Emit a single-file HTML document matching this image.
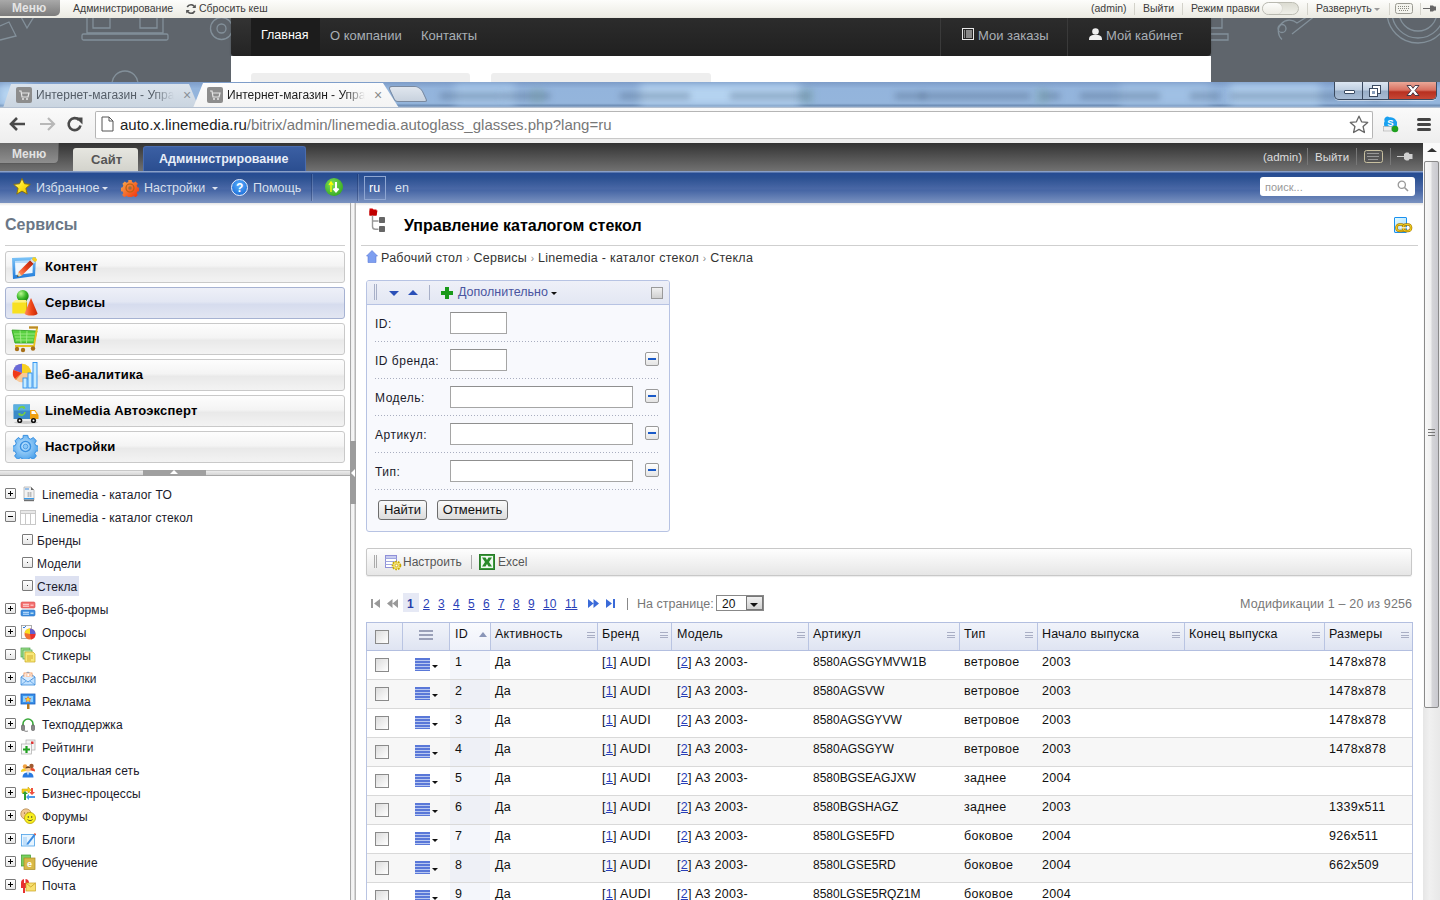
<!DOCTYPE html>
<html><head><meta charset="utf-8">
<style>
*{margin:0;padding:0;box-sizing:border-box}
html,body{width:1440px;height:900px;overflow:hidden;background:#fff;font-family:"Liberation Sans",sans-serif;font-size:12px;color:#000}
.a{position:absolute}
.t{position:absolute;white-space:nowrap;line-height:1}
/* top outer bar */
#topbar{left:0;top:0;width:1440px;height:18px;background:linear-gradient(#fdfdfb,#ebeae2)}
.tb{color:#3c3c3c;font-size:10.5px;top:3px}
.tsep{position:absolute;top:3px;width:1px;height:12px;background:#d3d2ca}
#pattern{left:0;top:18px;width:1440px;height:64px;background:#5f656c;overflow:hidden}
#darknav{left:231px;top:18px;width:980px;height:38px;background:linear-gradient(#2c2c2c,#202020);border-radius:0 0 4px 4px;box-shadow:0 1px 2px rgba(0,0,0,.3)}
#whitebox{left:231px;top:56px;width:980px;height:26px;background:#fff}
.nv{color:#a9afb5;font-size:13px;top:29px}
/* tabs strip */
#tabstrip{left:0;top:82px;width:1440px;height:26px;overflow:hidden;background:linear-gradient(#7d9cc8 0%,#93b4dc 25%,#94b5dc 82%,#7090b8 90%,#a8bcd6 100%)}
#toolbar{left:0;top:107px;width:1440px;height:36px;background:linear-gradient(#fafafa,#eeeeee);border-top:1px solid #b4c0d0}
/* admin top */
#admtop{left:0;top:143px;width:1424px;height:28px;background:linear-gradient(#333333,#717171)}
#bluebar{left:0;top:171px;width:1424px;height:32px;background:linear-gradient(#8aa0c8 0px,#8aa0c8 1px,#254b92 2px,#2c5192 7px,#4a68a6 18px,#4565a4 19px,#7a92c0 32px)}
.bt{color:#d8e0ee;font-size:12.5px;top:182px}
#vscroll{left:1423px;top:143px;width:17px;height:757px;background:linear-gradient(90deg,#e6e6e6,#f0f0f0 40%,#e8e8e8)}

/* content */
.lp-title{left:5px;top:217px;font-size:16px;font-weight:bold;color:#6b7786}
.mi{position:absolute;left:5px;width:340px;height:32px;border:1px solid #c9c9c9;border-radius:3px;background:linear-gradient(#fdfdfd 0%,#f4f4f4 45%,#e9e9e9 55%,#f3f3f3 100%)}
.mi.sel{border-color:#a6b2d2;background:linear-gradient(#eef0f8 0%,#e3e7f3 45%,#d6dcee 55%,#e2e6f2 100%)}
.mit{position:absolute;left:45px;font-size:13px;letter-spacing:.2px;font-weight:bold;color:#000;white-space:nowrap;line-height:1}
.tr{position:absolute;white-space:nowrap;line-height:1;font-size:12px;color:#1a1a2a;letter-spacing:.1px}
.pbox{position:absolute;width:11px;height:11px;border:1px solid #7a7a7a;background:linear-gradient(#fff,#e6e6e6);border-radius:1px}
.pbox.p::before{content:"";position:absolute;left:2px;top:4px;width:5px;height:1px;background:#000}
.pbox.p::after{content:"";position:absolute;left:4px;top:2px;width:1px;height:5px;background:#000}
.pbox.m::before{content:"";position:absolute;left:2px;top:4px;width:5px;height:1px;background:#000}
.pbox.d::before{content:"";position:absolute;left:4px;top:4px;width:1px;height:1px;background:#333}
.fl{position:absolute;left:375px;font-size:12px;color:#1a1a2a;white-space:nowrap;line-height:1;letter-spacing:.5px}
.inp{position:absolute;left:450px;height:22px;background:#fff;border:1px solid #a5a5a5;border-top-color:#8f8f8f}
.dots{position:absolute;left:375px;width:285px;height:1px;background:repeating-linear-gradient(90deg,#a9aec0 0 1px,transparent 1px 3px)}
.mbtn{position:absolute;left:645px;width:14px;height:14px;border:1px solid #9a9a9a;border-radius:2px;background:linear-gradient(#fff,#e4e4e4)}
.mbtn::before{content:"";position:absolute;left:2px;top:5px;width:8px;height:2px;background:#1a5ac8}
.btn{position:absolute;top:500px;height:20px;border:1px solid #6d6d6d;border-radius:3px;background:linear-gradient(#fafafa,#dcdcdc);font-size:13px;color:#111;text-align:center;line-height:18px}
.pg{position:absolute;top:598px;font-size:12px;color:#2a3fb8;text-decoration:underline;line-height:1;white-space:nowrap}
.th{position:absolute;top:628px;font-size:12.5px;color:#111;white-space:nowrap;line-height:1;letter-spacing:.2px}
.hm{position:absolute;top:632px;width:8px;height:6px;border-top:1px solid #a9aec4;border-bottom:1px solid #a9aec4}
.hm::before{content:"";position:absolute;left:0;top:2px;width:8px;height:1px;background:#a9aec4}
.cs{position:absolute;width:14px;height:14px;border:1px solid #8a8a8a;background:linear-gradient(135deg,#dcdcdc,#fff)}
.td{position:absolute;font-size:12.5px;color:#111;white-space:nowrap;line-height:1;letter-spacing:.3px}
.ln{color:#2a3fb8;text-decoration:underline}
.act{position:absolute;left:415px;width:15px;height:13px;background:repeating-linear-gradient(#5a78d8 0 2px,#b9c8f0 2px 3px)}
</style></head><body>
<!-- ========== OUTER SITE TOP BAR ========== -->
<div id="topbar" class="a"></div>
<div class="a" style="left:0;top:0;width:60px;height:16px;background:linear-gradient(#a9a9a9,#7b7b7b);border-radius:0 0 5px 0"></div>
<div class="t" style="left:12px;top:2px;font-size:12px;font-weight:bold;color:#e4e4e4">Меню</div>
<div class="t tb" style="left:73px">Администрирование</div>
<svg class="a" style="left:185px;top:3px" width="12" height="12" viewBox="0 0 12 12"><path d="M10 4.5A4.3 4.3 0 0 0 2.2 4M2 7.5A4.3 4.3 0 0 0 9.8 8" fill="none" stroke="#555" stroke-width="1.6"/><path d="M10.8 1.5v3.6H7.2zM1.2 10.5V6.9h3.6z" fill="#555"/></svg>
<div class="t tb" style="left:199px">Сбросить кеш</div>
<div class="t tb" style="left:1091px">(admin)</div>
<div class="tsep" style="left:1134px"></div>
<div class="t tb" style="left:1143px">Выйти</div>
<div class="tsep" style="left:1182px"></div>
<div class="t tb" style="left:1191px">Режим правки</div>
<div class="a" style="left:1262px;top:2px;width:37px;height:13px;border-radius:7px;background:linear-gradient(#dcdcd2,#efefe8);border:1px solid #bdbdb3"></div>
<div class="a" style="left:1263px;top:3px;width:19px;height:11px;border-radius:6px;background:linear-gradient(#fdfdfb,#ecebe3);box-shadow:0 0 1px #999"></div>
<div class="tsep" style="left:1307px"></div>
<div class="t tb" style="left:1316px">Развернуть</div>
<div class="a" style="left:1374px;top:8px;width:0;height:0;border-left:3px solid transparent;border-right:3px solid transparent;border-top:3px solid #999"></div>
<div class="tsep" style="left:1389px"></div>
<svg class="a" style="left:1395px;top:3px" width="18" height="11" viewBox="0 0 18 11"><rect x=".5" y=".5" width="17" height="10" rx="2" fill="#f4f4ee" stroke="#9a9a92"/><path d="M3 3.5h12M3 5.5h12M4 7.5h10" stroke="#8a8a82" stroke-dasharray="1 1"/></svg>
<div class="tsep" style="left:1420px"></div>
<svg class="a" style="left:1423px;top:3px" width="15" height="11" viewBox="0 0 15 11"><path d="M0 5.5h7" stroke="#666" stroke-width="1"/><path d="M7 2.5h3l1 1h2v4h-2l-1 1H7z" fill="#666"/></svg>

<!-- ========== OUTER SITE HEADER ========== -->
<div id="pattern" class="a">
  <svg width="1440" height="64" style="position:absolute;left:0;top:0" fill="none" stroke="#83909a" stroke-width="1.3">
    <path d="M0 8 L9 4 L16 18 L0 22"/><path d="M20 -3 L27 10 L35 -3"/>
    <path d="M87 -3 V15 H163 V-3"/><path d="M93 -3 V10 H110 V-3"/><path d="M140 -3 V10 H157 V-3"/>
    <rect x="82" y="16" width="86" height="6" rx="1.5"/>
    <circle cx="221.5" cy="10.5" r="11"/><circle cx="221.5" cy="10.5" r="4.5"/>
    <path d="M112 66 A13 13 0 0 1 138 66"/>
    <path d="M1211 10 H1222 V-3"/><path d="M1211 16 H1228 V22 H1211"/>
    <path d="M1282 21.5 A11 11 0 1 1 1297 5 L1310 -3 M1292 16 L1306 5 L1316 -3"/><circle cx="1282" cy="10.5" r="4"/>
    <circle cx="1418" cy="-6" r="31"/><circle cx="1418" cy="-6" r="26"/><circle cx="1418" cy="-6" r="19"/>
  </svg>
</div>
<div id="darknav" class="a"></div>
<div class="a" style="left:231px;top:18px;width:20px;height:38px;background:linear-gradient(#333,#242424);border-radius:0 0 0 4px"></div>
<div class="a" style="left:251px;top:18px;width:69px;height:38px;background:#1c1c1c"></div>
<div class="t" style="left:261px;top:29px;font-size:12.5px;color:#fff">Главная</div>
<div class="t nv" style="left:330px">О компании</div>
<div class="t nv" style="left:421px">Контакты</div>
<div class="a" style="left:940px;top:18px;width:1px;height:38px;background:#3a3a3a"></div>
<div class="a" style="left:1067px;top:18px;width:1px;height:38px;background:#3a3a3a"></div>
<svg class="a" style="left:962px;top:28px" width="12" height="12" viewBox="0 0 12 12"><rect x="0.5" y="0.5" width="11" height="11" fill="none" stroke="#e8e8e8"/><path d="M2 3h1M2 5h1M2 7h1M2 9h1M4 3h6M4 5h6M4 7h6M4 9h6" stroke="#e8e8e8" stroke-width="1.2"/></svg>
<div class="t nv" style="left:978px">Мои заказы</div>
<svg class="a" style="left:1089px;top:28px" width="13" height="12" viewBox="0 0 13 12"><circle cx="6.5" cy="3.5" r="3.3" fill="#f0f0f0"/><path d="M0 12 C0 7 3 7 6.5 7 C10 7 13 7 13 12Z" fill="#f0f0f0"/></svg>
<div class="t nv" style="left:1106px">Мой кабинет</div>
<div id="whitebox" class="a"></div>
<div class="a" style="left:251px;top:73px;width:219px;height:9px;background:#eeeeee;border-radius:3px 3px 0 0"></div>
<div class="a" style="left:491px;top:73px;width:220px;height:9px;background:#eeeeee;border-radius:3px 3px 0 0"></div>

<!-- ========== BROWSER TAB STRIP ========== -->
<div id="tabstrip" class="a">
<div class="a" style="left:0px;top:3px;width:30px;height:20px;background:#b8d6f2;filter:blur(4px)"></div>
<div class="a" style="left:455px;top:3px;width:60px;height:20px;background:#a8c8ea;filter:blur(4px)"></div>
<div class="a" style="left:640px;top:3px;width:160px;height:20px;background:#b5d3f0;filter:blur(4px)"></div>
<div class="a" style="left:1120px;top:3px;width:90px;height:20px;background:#a0c0e4;filter:blur(4px)"></div>
<div class="a" style="left:1230px;top:3px;width:90px;height:20px;background:#b0cfee;filter:blur(4px)"></div>
<div class="a" style="left:440px;top:11px;width:60px;height:6px;background:rgba(60,80,110,.35);filter:blur(3px)"></div>
<div class="a" style="left:500px;top:11px;width:50px;height:6px;background:rgba(60,80,110,.35);filter:blur(3px)"></div>
<div class="a" style="left:620px;top:11px;width:70px;height:6px;background:rgba(60,80,110,.35);filter:blur(3px)"></div>
<div class="a" style="left:730px;top:11px;width:80px;height:6px;background:rgba(60,80,110,.35);filter:blur(3px)"></div>
<div class="a" style="left:895px;top:11px;width:30px;height:6px;background:rgba(60,80,110,.35);filter:blur(3px)"></div>
<div class="a" style="left:920px;top:11px;width:110px;height:6px;background:rgba(60,80,110,.35);filter:blur(3px)"></div>
<div class="a" style="left:1040px;top:11px;width:20px;height:6px;background:rgba(60,80,110,.35);filter:blur(3px)"></div>
<div class="a" style="left:1080px;top:11px;width:80px;height:6px;background:rgba(60,80,110,.35);filter:blur(3px)"></div>
<div class="a" style="left:1190px;top:11px;width:30px;height:6px;background:rgba(60,80,110,.35);filter:blur(3px)"></div>
<div class="a" style="left:1230px;top:11px;width:110px;height:6px;background:rgba(60,80,110,.35);filter:blur(3px)"></div>
<div class="a" style="left:1340px;top:11px;width:40px;height:6px;background:rgba(60,80,110,.35);filter:blur(3px)"></div>
<div class="a" style="left:1370px;top:11px;width:40px;height:6px;background:rgba(60,80,110,.35);filter:blur(3px)"></div>
<div class="a" style="left:530px;top:6px;width:14px;height:16px;background:rgba(110,160,140,.22);filter:blur(3px)"></div>
<div class="a" style="left:800px;top:6px;width:14px;height:16px;background:rgba(110,160,140,.22);filter:blur(3px)"></div>
<div class="a" style="left:1035px;top:6px;width:14px;height:16px;background:rgba(110,160,140,.22);filter:blur(3px)"></div>
</div>
<!-- inactive tab -->
<div class="a" style="left:3px;top:84px;width:198px;height:24px;background:linear-gradient(#dbe3ec,#c9d4e0);clip-path:polygon(8px 0,186px 0,196px 100%,0 100%);"></div>
<div class="a" style="left:16px;top:87px;width:16px;height:16px;background:#8d8d8d;border-radius:2px"></div>
<svg class="a" style="left:18px;top:89px" width="12" height="12" viewBox="0 0 12 12"><path d="M1 2h2l1 6h6l1-4H4" fill="none" stroke="#e6e6e6" stroke-width="1.2"/><circle cx="5" cy="10" r="1" fill="#e6e6e6"/><circle cx="9" cy="10" r="1" fill="#e6e6e6"/></svg>
<div class="t" style="left:36px;top:89px;font-size:12px;color:#555e68;-webkit-mask-image:linear-gradient(90deg,#000 85%,transparent 100%)">Интернет-магазин - Упра</div>
<div class="t" style="left:183px;top:88px;font-size:14px;color:#8a9099">×</div>
<!-- active tab -->
<div class="a" style="left:193px;top:83px;width:206px;height:25px;background:linear-gradient(#fcfcfc,#f3f3f3);clip-path:polygon(10px 0,190px 0,206px 100%,0 100%);"></div>
<div class="a" style="left:207px;top:87px;width:16px;height:16px;background:#8d8d8d;border-radius:2px"></div>
<svg class="a" style="left:209px;top:89px" width="12" height="12" viewBox="0 0 12 12"><path d="M1 2h2l1 6h6l1-4H4" fill="none" stroke="#e6e6e6" stroke-width="1.2"/><circle cx="5" cy="10" r="1" fill="#e6e6e6"/><circle cx="9" cy="10" r="1" fill="#e6e6e6"/></svg>
<div class="t" style="left:227px;top:89px;font-size:12px;color:#1e1e1e;-webkit-mask-image:linear-gradient(90deg,#000 85%,transparent 100%)">Интернет-магазин - Упра</div>
<div class="t" style="left:374px;top:88px;font-size:14px;color:#8a8a8a">×</div>
<!-- new tab -->
<div class="a" style="left:395px;top:86px;width:33px;height:16px;background:linear-gradient(#e0e6ee,#c8d2de);border:1px solid #7a8aa0;border-radius:4px 6px 3px 3px;transform:skewX(25deg);transform-origin:0 100%"></div>
<!-- window controls -->
<div class="a" style="left:1334px;top:82px;width:103px;height:18px;border:1px solid #3a4a60;border-top:none;border-radius:0 0 5px 5px;overflow:hidden;background:linear-gradient(#dce6f2 0%,#c0d0e2 45%,#98aec8 55%,#a8bcd4 100%);box-shadow:0 1px 0 rgba(255,255,255,.5)">
  <div class="a" style="left:27px;top:0;width:1px;height:18px;background:#3a4a60"></div>
  <div class="a" style="left:53px;top:0;width:1px;height:18px;background:#3a4a60"></div>
  <div class="a" style="left:54px;top:0;width:49px;height:18px;background:linear-gradient(#eaa898 0%,#d87060 45%,#b83020 55%,#c84a38 100%)"></div>
  <div class="a" style="left:9px;top:8px;width:11px;height:4px;background:#fff;border:1px solid #3a4a60;border-radius:1px"></div>
  <svg class="a" style="left:33px;top:2px" width="14" height="14" viewBox="0 0 14 14"><rect x="4.5" y="1.5" width="8" height="8" fill="#fff" stroke="#3a4a60"/><rect x="1.5" y="4.5" width="8" height="8" fill="#fff" stroke="#3a4a60"/><rect x="4" y="7" width="3" height="3" fill="#8aa0bc"/></svg>
  <svg class="a" style="left:70px;top:2px" width="16" height="13" viewBox="0 0 16 13"><path d="M2 1.5h4l2 2.8 2-2.8h4l-4 5 4 5h-4l-2-2.8-2 2.8H2l4-5z" fill="#fff" stroke="#3a3040" stroke-width=".9"/></svg>
</div>

<!-- ========== BROWSER TOOLBAR ========== -->
<div id="toolbar" class="a"></div>
<svg class="a" style="left:9px;top:116px" width="18" height="16" viewBox="0 0 18 16"><path d="M16 8H3M8 2L2 8l6 6" fill="none" stroke="#4a4a4a" stroke-width="2.6" stroke-linejoin="miter"/></svg>
<svg class="a" style="left:38px;top:116px" width="18" height="16" viewBox="0 0 18 16"><path d="M2 8h13M10 2l6 6-6 6" fill="none" stroke="#b8b8b8" stroke-width="2.2"/></svg>
<svg class="a" style="left:66px;top:116px" width="18" height="17" viewBox="0 0 18 17"><path d="M14.5 9.5A6 6 0 1 1 13 4" fill="none" stroke="#4a4a4a" stroke-width="2.6"/><path d="M9.5 1.5h7v7z" fill="#4a4a4a"/></svg>
<div class="a" style="left:95px;top:111px;width:1278px;height:28px;background:#fff;border:1px solid #b5b5b5;border-radius:2px;border-bottom-color:#c8c8c8"></div>
<svg class="a" style="left:101px;top:116px" width="13" height="16" viewBox="0 0 13 16"><path d="M1 1h7l4 4v10H1z M8 1v4h4" fill="#fff" stroke="#555" stroke-width="1"/></svg>
<div class="t" style="left:120px;top:117px;font-size:15px;color:#222">auto.x.linemedia.ru<span style="color:#777">/bitrix/admin/linemedia.autoglass_glasses.php?lang=ru</span></div>
<svg class="a" style="left:1349px;top:115px" width="20" height="19" viewBox="0 0 20 19"><path d="M10 1.2l2.6 5.6 6.1.6-4.6 4.1 1.3 6-5.4-3.1-5.4 3.1 1.3-6L1.3 7.4l6.1-.6z" fill="none" stroke="#666" stroke-width="1.3" stroke-linejoin="round"/></svg>
<svg class="a" style="left:1382px;top:115px" width="18" height="18" viewBox="0 0 18 18"><path d="M5 1.5c1 0 1.8.3 2.4.8A6.5 6.5 0 0 1 15 9.5c0 .8-.1 1.6-.4 2.3H2.6A6.5 6.5 0 0 1 2 9c0-1 .2-1.9.6-2.7A3.5 3.5 0 0 1 5 1.5z" fill="#1aa0f0"/><text x="8.5" y="11" font-size="9.5" font-weight="bold" font-family="Liberation Sans" fill="#fff" text-anchor="middle">S</text><rect x="1.5" y="11.5" width="8" height="4.5" fill="#eee" stroke="#aaa" stroke-width=".6"/><circle cx="13" cy="14" r="3.3" fill="#20a020"/></svg>
<div class="a" style="left:1417px;top:118px;width:14px;height:3px;border-radius:1.5px;background:#444"></div>
<div class="a" style="left:1417px;top:123px;width:14px;height:3px;border-radius:1.5px;background:#444"></div>
<div class="a" style="left:1417px;top:128px;width:14px;height:3px;border-radius:1.5px;background:#444"></div>

<!-- ========== ADMIN TOP ========== -->
<div id="admtop" class="a"></div>
<div class="a" style="left:0;top:143px;width:59px;height:21px;background:linear-gradient(#6a6a6a,#8e8e8e);border-radius:0 0 5px 0;border:1px solid #5a5a5a;border-top:none;border-left:none"></div>
<div class="t" style="left:12px;top:148px;font-size:12px;font-weight:bold;color:#e2e2e2">Меню</div>
<div class="a" style="left:73px;top:148px;width:65px;height:23px;background:linear-gradient(#e6e6e0,#d3d3cc);border-radius:3px 3px 0 0"></div>
<div class="t" style="left:91px;top:153px;font-size:13px;font-weight:bold;color:#555">Сайт</div>
<div class="a" style="left:143px;top:146px;width:163px;height:25px;background:linear-gradient(#3b5fa3,#2b4e90);border-radius:3px 3px 0 0;border:1px solid #4a6cae;border-bottom:none"></div>
<div class="t" style="left:159px;top:153px;font-size:12.5px;font-weight:bold;color:#e8eef8">Администрирование</div>
<div class="t" style="left:1263px;top:152px;font-size:11.5px;color:#ddd">(admin)</div>
<div class="a" style="left:1307px;top:148px;width:1px;height:17px;background:#777"></div>
<div class="t" style="left:1315px;top:152px;font-size:11.5px;color:#ddd">Выйти</div>
<div class="a" style="left:1356px;top:148px;width:1px;height:17px;background:#777"></div>
<svg class="a" style="left:1364px;top:150px" width="19" height="13" viewBox="0 0 19 13"><rect x=".5" y=".5" width="18" height="12" rx="2" fill="#555" stroke="#c8c0a0"/><path d="M3.5 3.5h12M3.5 6.5h12M4.5 9.5h10" stroke="#ddd" stroke-dasharray="1 1"/></svg>
<div class="a" style="left:1390px;top:148px;width:1px;height:17px;background:#777"></div>
<svg class="a" style="left:1397px;top:151px" width="17" height="11" viewBox="0 0 17 11"><path d="M0 5.5h7" stroke="#ccc" stroke-width="1"/><path d="M7 3l2-1.5h2.5l1 1.5h3v5h-3l-1 1.5H9L7 8z" fill="#d0d0d0"/></svg>

<!-- ========== BLUE TOOLBAR ========== -->
<div id="bluebar" class="a"></div>
<div class="a" style="left:0;top:203px;width:1423px;height:3px;background:linear-gradient(#e4e4e4,rgba(255,255,255,0))"></div>
<svg class="a" style="left:13px;top:178px" width="18" height="17" viewBox="0 0 18 17"><defs><linearGradient id="gs" x1="0" y1="0" x2="1" y2="1"><stop offset="0" stop-color="#fffbe0"/><stop offset=".45" stop-color="#ffe820"/><stop offset="1" stop-color="#e8b800"/></linearGradient></defs><path d="M9 0.5l2.5 5.3 5.8.6-4.4 3.9 1.3 5.8L9 13.1l-5.2 3 1.3-5.8L.7 6.4l5.8-.6z" fill="url(#gs)" stroke="#8a7000" stroke-width=".9"/></svg>
<div class="t bt" style="left:36px">Избранное</div>
<div class="a" style="left:102px;top:187px;border-left:3px solid transparent;border-right:3px solid transparent;border-top:3px solid #dde4f0"></div>
<svg class="a" style="left:121px;top:179px" width="18" height="18" viewBox="0 0 27 27"><defs><linearGradient id="go" x1="0" y1="0" x2="1" y2="1"><stop offset="0" stop-color="#f8b050"/><stop offset="1" stop-color="#f02808"/></linearGradient></defs><path d="M11 1.5h5l.6 3 2.6 1.1 2.6-1.8 3.5 3.5-1.8 2.6 1.1 2.6 3 .6v5l-3 .6-1.1 2.6 1.8 2.6-3.5 3.5-2.6-1.8-2.6 1.1-.6 3h-5l-.6-3-2.6-1.1-2.6 1.8-3.5-3.5 1.8-2.6-1.1-2.6-3-.6v-5l3-.6 1.1-2.6L2.2 7.3l3.5-3.5 2.6 1.8L10.9 4.5z" fill="url(#go)"/><circle cx="13.5" cy="13.5" r="6" fill="none" stroke="#b86010" stroke-width="1.8"/><circle cx="13.5" cy="13.5" r="2.6" fill="#9a7040"/></svg>
<div class="t bt" style="left:144px">Настройки</div>
<div class="a" style="left:212px;top:187px;border-left:3px solid transparent;border-right:3px solid transparent;border-top:3px solid #dde4f0"></div>
<div class="a" style="left:231px;top:179px;width:17px;height:17px;border-radius:50%;background:radial-gradient(circle at 50% 35%,#5ab0ff,#1060d0);border:1.5px solid #e8f0ff"></div>
<div class="t" style="left:236px;top:182px;font-size:12px;font-weight:bold;color:#fff">?</div>
<div class="t bt" style="left:253px">Помощь</div>
<div class="a" style="left:311px;top:174px;width:1px;height:27px;background:rgba(20,40,90,.35);box-shadow:1px 0 0 rgba(255,255,255,.15)"></div>
<div class="a" style="left:325px;top:178px;width:18px;height:18px;border-radius:50%;background:radial-gradient(circle at 40% 35%,#7ee05a,#229a10)"></div>
<svg class="a" style="left:327px;top:180px" width="14" height="14" viewBox="0 0 14 14"><path d="M4 12V3M2 5l2-3 2 3" fill="none" stroke="#ff0" stroke-width="1.3"/><path d="M9 2v9M6.5 8.5L9 11.5l2.5-3" fill="none" stroke="#fff" stroke-width="2"/></svg>
<div class="a" style="left:357px;top:174px;width:1px;height:27px;background:rgba(20,40,90,.35);box-shadow:1px 0 0 rgba(255,255,255,.15)"></div>
<div class="a" style="left:364px;top:176px;width:22px;height:24px;border:1px solid #8ea6d2"></div>
<div class="t bt" style="left:369px;top:182px;color:#fff">ru</div>
<div class="t bt" style="left:395px">en</div>
<div class="a" style="left:1260px;top:177px;width:155px;height:19px;background:#fff;border-radius:3px"></div>
<div class="t" style="left:1265px;top:182px;font-size:11px;color:#999">поиск...</div>
<svg class="a" style="left:1397px;top:180px" width="12" height="12" viewBox="0 0 12 12"><circle cx="4.8" cy="4.8" r="3.6" fill="none" stroke="#999" stroke-width="1.3"/><path d="M7.5 7.5l3.5 3.5" stroke="#999" stroke-width="1.6"/></svg>

<div class="a" style="left:350px;top:203px;width:6px;height:697px;background:linear-gradient(90deg,#a8a8a8 0,#a8a8a8 1px,#efefef 1px,#f6f6f6 4px,#b5b5b5 5px,#b5b5b5 6px)"></div>
<div class="a" style="left:350px;top:441px;width:6px;height:63px;background:#9c9c9c"></div>
<div class="a" style="left:351px;top:469px;width:0;height:0;border-top:4px solid transparent;border-bottom:4px solid transparent;border-right:4px solid #fff"></div>
<div class="t lp-title">Сервисы</div>
<div class="a" style="left:5px;top:245px;width:340px;height:1px;background:#cfcfcf"></div>
<div class="mi" style="top:251px"></div>
<div class="mit" style="top:260px">Контент</div>
<div class="mi sel" style="top:287px"></div>
<div class="mit" style="top:296px">Сервисы</div>
<div class="mi" style="top:323px"></div>
<div class="mit" style="top:332px">Магазин</div>
<div class="mi" style="top:359px"></div>
<div class="mit" style="top:368px">Веб-аналитика</div>
<div class="mi" style="top:395px"></div>
<div class="mit" style="top:404px">LineMedia Автоэксперт</div>
<div class="mi" style="top:431px"></div>
<div class="mit" style="top:440px">Настройки</div>
<svg class="a" style="left:10px;top:253px" width="30" height="28" viewBox="0 0 30 28">
<defs><linearGradient id="gw" x1="0" y1="0" x2="0" y2="1"><stop offset="0" stop-color="#7cc4f8"/><stop offset="1" stop-color="#1f7ad8"/></linearGradient><linearGradient id="gp" x1="0" y1="0" x2="1" y2="0"><stop offset="0" stop-color="#ff8a5a"/><stop offset=".5" stop-color="#e8401a"/><stop offset="1" stop-color="#b82a10"/></linearGradient></defs>
<path d="M2 5L26 4 25 23 3 26z" fill="url(#gw)"/><path d="M5 8L23 7.5 22.5 20 5.5 22z" fill="#eef7ff"/><path d="M5 8h18v2H5z" fill="#b8dcfa"/>
<g transform="rotate(-45 17 14)"><rect x="7" y="11.5" width="17" height="5" fill="url(#gp)"/><path d="M7 11.5L3 14l4 2.5z" fill="#f4d8a0"/><path d="M3 14l1.6-1 0 2z" fill="#333"/><rect x="24" y="11.5" width="2" height="5" fill="#ddd"/><rect x="26" y="11.5" width="3.5" height="5" rx="1.5" fill="#f8d020"/></g></svg>
<svg class="a" style="left:11px;top:289px" width="28" height="28" viewBox="0 0 28 28">
<defs><radialGradient id="gb" cx=".35" cy=".3" r=".7"><stop offset="0" stop-color="#b8f890"/><stop offset=".6" stop-color="#3ab82a"/><stop offset="1" stop-color="#1a8a10"/></radialGradient><linearGradient id="gc" x1="0" y1="0" x2="1" y2="0"><stop offset="0" stop-color="#ff9060"/><stop offset=".5" stop-color="#f04818"/><stop offset="1" stop-color="#c82808"/></linearGradient></defs>
<circle cx="11.7" cy="7" r="6" fill="url(#gb)"/>
<path d="M1.3 13.5l3-2.5h11l-1 3z" fill="#fff480"/><path d="M1.3 13.5h13.7v11H1.3z" fill="#f8e020"/><path d="M15 14l1-3v10.5l-1 3z" fill="#d8b800"/>
<path d="M20 9L13.6 24.5a6.5 2 0 0 0 13 0z" fill="url(#gc)"/></svg>
<svg class="a" style="left:11px;top:325px" width="28" height="28" viewBox="0 0 28 28">
<path d="M1 5L26 6 23 18H4z" fill="#58d040" stroke="#2a9a1a" stroke-width=".8"/><path d="M3 9h21M4 12h19M5 15h17M9 5.5L10 18M16 6l-.5 12" stroke="#a8f090" stroke-width=".8"/>
<path d="M18 2.5h9M26 3l-3 18H4" fill="none" stroke="#e8c020" stroke-width="1.8"/><rect x="18" y="1.5" width="9" height="2" fill="#b88830"/>
<circle cx="6" cy="24" r="2.2" fill="#a87018"/><circle cx="12" cy="25" r="2.2" fill="#a87018"/><circle cx="22" cy="23.5" r="2.2" fill="#a87018"/></svg>
<svg class="a" style="left:11px;top:361px" width="28" height="28" viewBox="0 0 28 28">
<circle cx="11" cy="12" r="9.2" fill="#f8c898"/><path d="M11 12V2.8A9.2 9.2 0 0 1 20.2 12z" fill="#f8d020"/><path d="M11 12V2.8A9.2 9.2 0 0 0 2.3 9z" fill="#6a6ad8"/><path d="M11 12L2.3 9A9.2 9.2 0 0 0 4 18z" fill="#f03818"/><path d="M11 12L4 18A9.2 9.2 0 0 0 5 19" fill="#f08030"/>
<rect x="12" y="17" width="4" height="10" fill="#c8ecff" stroke="#2a90f0" stroke-width=".9"/><rect x="17" y="12" width="4" height="15" fill="#c8ecff" stroke="#2a90f0" stroke-width=".9"/><rect x="22" y="1.5" width="4" height="25.5" fill="#c8ecff" stroke="#2a90f0" stroke-width=".9"/></svg>
<svg class="a" style="left:11px;top:400px" width="28" height="26" viewBox="0 0 28 26">
<ellipse cx="15" cy="22.5" rx="12" ry="1.5" fill="#ccc"/>
<rect x="2.5" y="4.5" width="16.5" height="14.5" fill="#3a8ac8"/><rect x="2.5" y="4.5" width="16.5" height="6" fill="#5ab0e0"/>
<path d="M7.5 10a3.5 3.5 0 0 1 6-2M14 12a3.5 3.5 0 0 1-6 2" stroke="#7ad040" stroke-width="1.6" fill="none"/><path d="M13 6l1.5 2.5-2.8.2zM8.5 16L7 13.5l2.8-.2z" fill="#7ad040"/>
<path d="M19 10h5l3.5 5v4H19z" fill="#f0a010"/><path d="M20.5 11h3l2 3h-5z" fill="#fff"/>
<circle cx="8.7" cy="20.5" r="2.6" fill="#111"/><circle cx="8.7" cy="20.5" r="1" fill="#fff"/><circle cx="22.5" cy="20.5" r="2.6" fill="#111"/><circle cx="22.5" cy="20.5" r="1" fill="#fff"/></svg>
<svg class="a" style="left:13px;top:434px" width="25" height="25" viewBox="0 0 27 27">
<defs><radialGradient id="gg" cx=".45" cy=".4" r=".6"><stop offset="0" stop-color="#bfe4ff"/><stop offset="1" stop-color="#4aa0ea"/></radialGradient></defs>
<path d="M11 1.5h5l.6 3 2.6 1.1 2.6-1.8 3.5 3.5-1.8 2.6 1.1 2.6 3 .6v5l-3 .6-1.1 2.6 1.8 2.6-3.5 3.5-2.6-1.8-2.6 1.1-.6 3h-5l-.6-3-2.6-1.1-2.6 1.8-3.5-3.5 1.8-2.6-1.1-2.6-3-.6v-5l3-.6 1.1-2.6L2.2 7.3l3.5-3.5 2.6 1.8L10.9 4.5z" fill="url(#gg)" stroke="#2a88e0" stroke-width="1"/>
<circle cx="13.5" cy="13.5" r="5.5" fill="none" stroke="#3a90e0" stroke-width="1.5"/><circle cx="13.5" cy="13.5" r="2.5" fill="#8ac8f8" stroke="#3a90e0" stroke-width=".8"/></svg>
<div class="a" style="left:0;top:470px;width:350px;height:6px;background:linear-gradient(#ececec,#d5d5d5);border-top:1px solid #c8c8c8;border-bottom:1px solid #a8a8a8"></div>
<div class="a" style="left:143px;top:470px;width:63px;height:6px;background:#a0a0a0"></div>
<div class="a" style="left:170px;top:470px;border-left:4px solid transparent;border-right:4px solid transparent;border-bottom:4px solid #fff"></div>
<div class="pbox p" style="left:5px;top:488px"></div>
<svg class="a" style="left:20px;top:486px" width="16" height="16" viewBox="0 0 16 16"><path d="M4 1h7l3 3v10H4z" fill="#f2f2f2" stroke="#b0b0b0" stroke-width=".8"/><path d="M11 1v3h3" fill="#666"/><rect x="5" y="2.5" width="4" height="1" fill="#3a8ae0"/><path d="M7 6h5v5H7z" fill="#d8d8d8"/><path d="M8.5 6v5M10.5 6v5" stroke="#aaa" stroke-width=".6"/><rect x="4" y="12" width="10" height="1.3" fill="#3a9ae8"/><rect x="4" y="13.6" width="10" height="1.6" fill="#707070"/></svg>
<div class="tr" style="left:42px;top:489px">Linemedia - каталог ТО</div>
<div class="pbox m" style="left:5px;top:511px"></div>
<svg class="a" style="left:20px;top:509px" width="16" height="16" viewBox="0 0 16 16"><rect x=".5" y="1.5" width="15" height="14" fill="#fff" stroke="#c8c8c8"/><rect x="1" y="2" width="14" height="2" fill="#e8e8e8"/><path d="M.5 4.5h15M5.5 4.5v11M10.5 4.5v11" stroke="#c8c8c8"/></svg>
<div class="tr" style="left:42px;top:512px">Linemedia - каталог стекол</div>
<div class="pbox d" style="left:22px;top:534px"></div>
<div class="tr" style="left:37px;top:535px">Бренды</div>
<div class="pbox d" style="left:22px;top:557px"></div>
<div class="tr" style="left:37px;top:558px">Модели</div>
<div class="pbox d" style="left:22px;top:580px"></div>
<div class="a" style="left:35px;top:576px;width:44px;height:20px;background:#dde1f1"></div>
<div class="tr" style="left:37px;top:581px">Стекла</div>
<div class="pbox p" style="left:5px;top:603px"></div>
<svg class="a" style="left:20px;top:601px" width="16" height="16" viewBox="0 0 16 16"><rect x="1" y="1" width="14" height="6" rx="1.2" fill="#f27070" stroke="#d84a4a" stroke-width=".6"/><path d="M3 3.3h6M3 5.2h6" stroke="#fde0e0" stroke-width="1"/><rect x="10.5" y="3.5" width="3" height="1.5" fill="#fbb"/><rect x="1" y="9" width="14" height="6" rx="1.2" fill="#3f8fe0" stroke="#2a70c0" stroke-width=".6"/><path d="M3 11.3h6M3 13.2h6" stroke="#d0e8ff" stroke-width="1"/><rect x="10.5" y="11.5" width="3" height="1.5" fill="#bde"/></svg>
<div class="tr" style="left:42px;top:604px">Веб-формы</div>
<div class="pbox p" style="left:5px;top:626px"></div>
<svg class="a" style="left:20px;top:624px" width="16" height="16" viewBox="0 0 16 16"><rect x="1.5" y="1.5" width="10" height="13" fill="#fafafa" stroke="#999" stroke-width=".8"/><path d="M3 3l1 1 2-2" stroke="#2a7ae0" fill="none"/><circle cx="10" cy="10" r="5.5" fill="#f07030"/><path d="M10 10V4.5A5.5 5.5 0 0 1 15.5 10z" fill="#6060d0"/><path d="M10 10V4.5A5.5 5.5 0 0 0 4.6 9z" fill="#f8e020"/><path d="M10 10h5.5A5.5 5.5 0 0 1 11 15.4z" fill="#e83030"/></svg>
<div class="tr" style="left:42px;top:627px">Опросы</div>
<div class="pbox d" style="left:5px;top:649px"></div>
<svg class="a" style="left:20px;top:647px" width="16" height="16" viewBox="0 0 16 16"><rect x="1" y="1" width="9" height="9" fill="#9ee08a" stroke="#4aa04a" stroke-width=".7"/><rect x="3" y="3" width="9" height="9" fill="#bde8b0" stroke="#4aa04a" stroke-width=".7"/><path d="M5 5h8l2 2v8H5z" fill="#f8e878" stroke="#c8a820" stroke-width=".7"/><path d="M7 9h6M7 11h6M7 13h4" stroke="#c8a020" stroke-width=".8"/></svg>
<div class="tr" style="left:42px;top:650px">Стикеры</div>
<div class="pbox p" style="left:5px;top:672px"></div>
<svg class="a" style="left:20px;top:670px" width="16" height="16" viewBox="0 0 16 16"><path d="M1 7l7-5 7 5v8H1z" fill="#bfe0ff" stroke="#3a8ad8" stroke-width=".8"/><rect x="4" y="3" width="8" height="6" fill="#fff" stroke="#f09050" stroke-width=".8"/><path d="M5.5 5h2M9 5h2M5.5 7h5" stroke="#f08040" stroke-width=".8"/><path d="M1 7l7 5 7-5" fill="#d8ecff" stroke="#3a8ad8" stroke-width=".8"/><path d="M1 15l5-4M15 15l-5-4" stroke="#3a8ad8" stroke-width=".6"/></svg>
<div class="tr" style="left:42px;top:673px">Рассылки</div>
<div class="pbox p" style="left:5px;top:695px"></div>
<svg class="a" style="left:20px;top:693px" width="16" height="16" viewBox="0 0 16 16"><rect x="1" y="1" width="14" height="10" fill="#3a90e8" stroke="#1a60c0" stroke-width=".8"/><rect x="3" y="3" width="10" height="6" fill="#8ad0ff"/><path d="M8 3.5l1 2h2l-1.5 1.3.6 2L8 7.8 6 8.8l.6-2L5 5.5h2z" fill="#ffe020" stroke="#e84a20" stroke-width=".5"/><rect x="7" y="11" width="2.5" height="5" fill="#b87820"/></svg>
<div class="tr" style="left:42px;top:696px">Реклама</div>
<div class="pbox p" style="left:5px;top:718px"></div>
<svg class="a" style="left:20px;top:716px" width="16" height="16" viewBox="0 0 16 16"><path d="M3 10V8a5 5 0 0 1 10 0v2" fill="none" stroke="#3aa83a" stroke-width="1.6"/><rect x="1.5" y="9" width="3" height="5.5" rx="1" fill="#888" stroke="#555" stroke-width=".6"/><rect x="11.5" y="9" width="3" height="5.5" rx="1" fill="#888" stroke="#555" stroke-width=".6"/><path d="M4 14.5c1 1 3 1 4 .5" stroke="#666" fill="none" stroke-width=".8"/></svg>
<div class="tr" style="left:42px;top:719px">Техподдержка</div>
<div class="pbox p" style="left:5px;top:741px"></div>
<svg class="a" style="left:20px;top:739px" width="16" height="16" viewBox="0 0 16 16"><rect x="6" y="1" width="9" height="10" fill="#f4f4f4" stroke="#aaa" stroke-width=".7"/><rect x="11" y="2.5" width="2.5" height="2.5" fill="#e03030"/><rect x="1.5" y="5" width="10" height="10" fill="#fafafa" stroke="#aaa" stroke-width=".7"/><path d="M6.5 7v7M3 10.5h7" stroke="#20a020" stroke-width="2.2"/></svg>
<div class="tr" style="left:42px;top:742px">Рейтинги</div>
<div class="pbox p" style="left:5px;top:764px"></div>
<svg class="a" style="left:20px;top:762px" width="16" height="16" viewBox="0 0 16 16"><circle cx="5" cy="4.5" r="2.2" fill="#f0a040"/><path d="M1 10c0-3 2-3.5 4-3.5s3 .5 3.5 2" fill="#f8d020"/><circle cx="11.5" cy="4" r="2.2" fill="#a05a30"/><path d="M9 8c.5-1.5 1.5-2 2.5-2 2 0 3.5.5 3.5 3.5" fill="#e84a2a"/><circle cx="8" cy="7" r="2.6" fill="#f8c890"/><path d="M8 4.2c-1.5 0-2.6 1-2.6 2.3 1.5-.3 3.5-.7 5 0 0-1.3-1-2.3-2.4-2.3z" fill="#6a4020"/><path d="M2.5 15.5c0-4 2.5-5 5.5-5s5.5 1 5.5 5z" fill="#2a7ae0"/><path d="M7 10.5l1 3 1-3" fill="#fff"/></svg>
<div class="tr" style="left:42px;top:765px">Социальная сеть</div>
<div class="pbox p" style="left:5px;top:787px"></div>
<svg class="a" style="left:20px;top:785px" width="16" height="16" viewBox="0 0 16 16"><path d="M2 4h6V2l3 3-3 3V6H4v2H2z" fill="#f8d020" stroke="#c8a000" stroke-width=".5"/><path d="M12 1v6h2l-3 3-3-3h2V3h2z" fill="#f05040" transform="translate(1 0)"/><path d="M4 15V9H2l3-3 3 3H6v6z" fill="#30a030"/><path d="M14 10H8V8l-3 3 3 3v-2h6z" fill="#4a9ae8" transform="translate(1 1)"/></svg>
<div class="tr" style="left:42px;top:788px">Бизнес-процессы</div>
<div class="pbox p" style="left:5px;top:810px"></div>
<svg class="a" style="left:20px;top:808px" width="16" height="16" viewBox="0 0 16 16"><circle cx="6" cy="6" r="5.2" fill="#f0c890" stroke="#b08040" stroke-width=".7"/><circle cx="4.5" cy="5" r=".6" fill="#704010"/><circle cx="7.5" cy="5" r=".6" fill="#704010"/><circle cx="10" cy="10" r="5.5" fill="#f8f020" stroke="#b8a000" stroke-width=".8"/><circle cx="8.3" cy="9" r=".7" fill="#333"/><circle cx="11.7" cy="9" r=".7" fill="#333"/><path d="M7.5 11.5c1.2 1.5 3.8 1.5 5 0" stroke="#333" fill="none" stroke-width=".8"/></svg>
<div class="tr" style="left:42px;top:811px">Форумы</div>
<div class="pbox p" style="left:5px;top:833px"></div>
<svg class="a" style="left:20px;top:831px" width="16" height="16" viewBox="0 0 16 16"><rect x="1.5" y="3.5" width="13" height="11.5" fill="#e6f4ff" stroke="#4aa0e8" stroke-width=".8"/><path d="M3 7h4M3 9h4M3 11h4M3 13h6" stroke="#7ab8f0" stroke-width=".7"/><path d="M7 12l7-9 1.5 1.2-7 9-2 .5z" fill="#3a8ae0"/><path d="M14 3l1.5 1.2.8-1-1.5-1.2z" fill="#e84a2a"/></svg>
<div class="tr" style="left:42px;top:834px">Блоги</div>
<div class="pbox p" style="left:5px;top:856px"></div>
<svg class="a" style="left:20px;top:854px" width="16" height="16" viewBox="0 0 16 16"><rect x="1.5" y="1" width="9" height="11" fill="#7ad060" stroke="#3a9a2a" stroke-width=".7"/><rect x="4" y="4" width="11" height="11.5" fill="#d8b848" stroke="#a88a20" stroke-width=".7"/><text x="9.5" y="13" font-size="9" font-family="Liberation Sans" fill="#fff" text-anchor="middle" font-weight="bold">e</text></svg>
<div class="tr" style="left:42px;top:857px">Обучение</div>
<div class="pbox p" style="left:5px;top:879px"></div>
<svg class="a" style="left:20px;top:877px" width="16" height="16" viewBox="0 0 16 16"><path d="M1 6a4 4 0 0 1 8 0v5H1z" fill="#e83030"/><rect x="3" y="10" width="2" height="6" fill="#e83030"/><rect x="4" y="2" width="1.5" height="4" fill="#fff"/><rect x="6" y="6" width="9.5" height="8" fill="#f8e070" stroke="#c8a020" stroke-width=".7"/><path d="M6 6l4.75 4 4.75-4" fill="none" stroke="#c8a020" stroke-width=".8"/></svg>
<div class="tr" style="left:42px;top:880px">Почта</div>
<svg class="a" style="left:368px;top:207px" width="22" height="28" viewBox="0 0 22 28"><path d="M1.5 1.5h3l1 1h3v6h-7z" fill="#d00000"/><path d="M1.5 3.5h8l-1 5h-7z" fill="#c00000"/><path d="M4.5 8.5v11c0 2 1 2.8 3 2.8h3M4.5 14h6" fill="none" stroke="#999" stroke-width="1.4"/><rect x="11" y="10" width="6" height="6" rx=".8" fill="#666"/><rect x="11" y="19" width="6" height="6" rx=".8" fill="#666"/></svg>
<div class="t" style="left:404px;top:218px;font-size:16px;font-weight:bold;color:#000">Управление каталогом стекол</div>
<div class="a" style="left:1394px;top:217px;width:13px;height:16px;background:linear-gradient(135deg,#e0fbff,#a8d8f8);border:1px solid #1a90f0;border-radius:1px"></div>
<svg class="a" style="left:1395px;top:223px" width="18" height="10" viewBox="0 0 18 10"><rect x="1.5" y="1.5" width="8" height="6.5" rx="3" fill="none" stroke="#a87800" stroke-width="2.6"/><rect x="1.5" y="1.5" width="8" height="6.5" rx="3" fill="none" stroke="#f0d020" stroke-width="1.2"/><rect x="8" y="1.5" width="8" height="6.5" rx="3" fill="none" stroke="#a87800" stroke-width="2.6"/><rect x="8" y="1.5" width="8" height="6.5" rx="3" fill="none" stroke="#f0d020" stroke-width="1.2"/><path d="M5 4.8h8" stroke="#fff" stroke-width="1"/></svg>
<div class="a" style="left:361px;top:245px;width:1057px;height:1px;background:#cfcfcf"></div>
<svg class="a" style="left:366px;top:250px" width="12" height="13" viewBox="0 0 12 13"><path d="M6 0.5L11.5 6H10v6.5H2V6H0.5z" fill="#7d9ef0" stroke="#5a7ad8" stroke-width=".6"/></svg>
<div class="t" style="left:381px;top:252px;font-size:12.5px;color:#333;letter-spacing:.25px">Рабочий стол <span style="color:#888;font-size:10px">›</span> Сервисы <span style="color:#888;font-size:10px">›</span> Linemedia - каталог стекол <span style="color:#888;font-size:10px">›</span> Стекла</div>
<div class="a" style="left:366px;top:280px;width:304px;height:252px;border:1px solid #b7c3e3;border-radius:3px;background:#f8f9fd"></div>
<div class="a" style="left:367px;top:281px;width:302px;height:24px;background:linear-gradient(#eef0f8,#e3e7f3);border-bottom:1px solid #b7c3e3;border-radius:2px 2px 0 0"></div>
<div class="a" style="left:374px;top:284px;width:3px;height:16px;border-left:1px solid #a8b0c8;border-right:1px solid #a8b0c8"></div>
<div class="a" style="left:389px;top:291px;border-left:5px solid transparent;border-right:5px solid transparent;border-top:5px solid #2a50b8"></div>
<div class="a" style="left:408px;top:290px;border-left:5px solid transparent;border-right:5px solid transparent;border-bottom:5px solid #2a50b8"></div>
<div class="a" style="left:429px;top:285px;width:1px;height:15px;background:#a8b0c8"></div>
<div class="a" style="left:441px;top:291px;width:12px;height:4px;background:#1a9a1a"></div><div class="a" style="left:445px;top:287px;width:4px;height:12px;background:#1a9a1a"></div>
<div class="t" style="left:458px;top:286px;font-size:12.5px;color:#4a55a0">Дополнительно</div>
<div class="a" style="left:551px;top:292px;border-left:3px solid transparent;border-right:3px solid transparent;border-top:3px solid #111"></div>
<div class="a" style="left:651px;top:287px;width:12px;height:12px;border:1px solid #9a9a9a;background:linear-gradient(#f0f0f0,#d0d0d0)"></div>
<div class="fl" style="top:318px">ID:</div>
<div class="inp" style="top:312px;width:57px"></div>
<div class="dots" style="top:341px"></div>
<div class="fl" style="top:355px">ID бренда:</div>
<div class="inp" style="top:349px;width:57px"></div>
<div class="dots" style="top:378px"></div>
<div class="mbtn" style="top:352px"></div>
<div class="fl" style="top:392px">Модель:</div>
<div class="inp" style="top:386px;width:183px"></div>
<div class="dots" style="top:415px"></div>
<div class="mbtn" style="top:389px"></div>
<div class="fl" style="top:429px">Артикул:</div>
<div class="inp" style="top:423px;width:183px"></div>
<div class="dots" style="top:452px"></div>
<div class="mbtn" style="top:426px"></div>
<div class="fl" style="top:466px">Тип:</div>
<div class="inp" style="top:460px;width:183px"></div>
<div class="dots" style="top:489px"></div>
<div class="mbtn" style="top:463px"></div>
<div class="btn" style="left:378px;width:49px">Найти</div>
<div class="btn" style="left:437px;width:71px">Отменить</div>
<div class="a" style="left:366px;top:548px;width:1046px;height:28px;border:1px solid #c8c8c8;border-radius:2px;background:linear-gradient(#fefefe,#f2f2f2 50%,#e6e6e6);box-shadow:0 1px 1px rgba(0,0,0,.08)"></div>
<div class="a" style="left:374px;top:555px;width:3px;height:13px;border-left:1px solid #aaa;border-right:1px solid #aaa"></div>
<svg class="a" style="left:384px;top:554px" width="18" height="17" viewBox="0 0 18 17"><rect x="1.5" y="1.5" width="11" height="12" fill="#fff" stroke="#9090d8"/><path d="M1.5 4.5h11M1.5 7.5h11M1.5 10.5h11" stroke="#a0a8e0"/><rect x="2" y="2" width="10" height="2" fill="#c8ccf0"/></svg>
<svg class="a" style="left:391px;top:560px" width="11" height="11" viewBox="0 0 11 11"><circle cx="5.5" cy="5.5" r="3.8" fill="#f0e060" stroke="#c8a800" stroke-width="2" stroke-dasharray="1.6 1.1"/><circle cx="5.5" cy="5.5" r="3" fill="#f4e070"/><circle cx="5.5" cy="5.5" r="1.3" fill="#fff" stroke="#b89000" stroke-width=".6"/></svg>
<div class="t" style="left:403px;top:556px;font-size:12px;color:#555">Настроить</div>
<div class="a" style="left:471px;top:555px;width:1px;height:14px;background:#aaa"></div>
<svg class="a" style="left:479px;top:554px" width="16" height="16" viewBox="0 0 16 16"><rect x=".5" y=".5" width="15" height="15" fill="#3a9a3a" stroke="#2a7a2a"/><rect x="2" y="2" width="12" height="12" fill="#f0f8f0"/><path d="M3 3.5h3.5l1.5 2.5 1.5-2.5H13l-3 4.5 3 4.5H9.5L8 10l-1.5 2.5H3l3-4.5z" fill="#2a8a2a"/></svg>

<div class="t" style="left:498px;top:556px;font-size:12px;color:#555">Excel</div>
<svg class="a" style="left:371px;top:599px" width="10" height="9" viewBox="0 0 10 9"><rect x="0" y="0" width="2" height="9" fill="#999"/><path d="M9 0v9L3 4.5z" fill="#999"/></svg>
<svg class="a" style="left:387px;top:599px" width="11" height="9" viewBox="0 0 11 9"><path d="M5.5 0v9L0 4.5zM11 0v9L5.5 4.5z" fill="#999"/></svg>
<div class="a" style="left:403px;top:593px;width:16px;height:19px;background:#e6e9f5"></div>
<div class="t" style="left:407px;top:598px;font-size:12px;font-weight:bold;color:#2a3fa8">1</div>
<div class="pg" style="left:423px">2</div>
<div class="pg" style="left:438px">3</div>
<div class="pg" style="left:453px">4</div>
<div class="pg" style="left:468px">5</div>
<div class="pg" style="left:483px">6</div>
<div class="pg" style="left:498px">7</div>
<div class="pg" style="left:513px">8</div>
<div class="pg" style="left:528px">9</div>
<div class="pg" style="left:543px">10</div><div class="pg" style="left:565px">11</div>
<svg class="a" style="left:588px;top:599px" width="11" height="9" viewBox="0 0 11 9"><path d="M0 0v9l5.5-4.5zM5.5 0v9L11 4.5z" fill="#3a6ad8"/></svg>
<svg class="a" style="left:606px;top:599px" width="9" height="9" viewBox="0 0 9 9"><path d="M0 0v9l6-4.5z" fill="#3a6ad8"/><rect x="7" y="0" width="2" height="9" fill="#3a6ad8"/></svg>
<div class="a" style="left:627px;top:598px;width:1px;height:12px;background:#888"></div>
<div class="t" style="left:637px;top:598px;font-size:12.5px;color:#777">На странице:</div>
<div class="a" style="left:716px;top:595px;width:48px;height:16px;border:1px solid #888;background:#fff"></div>
<div class="t" style="left:722px;top:598px;font-size:12px;color:#111">20</div>
<div class="a" style="left:746px;top:596px;width:17px;height:14px;background:linear-gradient(#f0f0f0,#d0d0d0);border:1px solid #777;border-width:1px 1px 1px 1px"></div>
<div class="a" style="left:750px;top:603px;border-left:4px solid transparent;border-right:4px solid transparent;border-top:4px solid #111"></div>
<div class="t" style="left:1240px;top:598px;font-size:12.5px;color:#777;letter-spacing:.15px">Модификации 1 – 20 из 9256</div>
<div class="a" style="left:366px;top:622px;width:1047px;height:29px;background:linear-gradient(#f1f3fa,#e8ecf6 50%,#dfe4f2);border:1px solid #b3bfe0"></div>
<div class="a" style="left:450px;top:623px;width:40px;height:27px;background:linear-gradient(#fafbfe,#eef1f9)"></div>
<div class="a" style="left:402px;top:623px;width:1px;height:27px;background:#b9c4e2"></div>
<div class="a" style="left:449px;top:623px;width:1px;height:27px;background:#b9c4e2"></div>
<div class="a" style="left:490px;top:623px;width:1px;height:27px;background:#b9c4e2"></div>
<div class="a" style="left:597px;top:623px;width:1px;height:27px;background:#b9c4e2"></div>
<div class="a" style="left:671px;top:623px;width:1px;height:27px;background:#b9c4e2"></div>
<div class="a" style="left:808px;top:623px;width:1px;height:27px;background:#b9c4e2"></div>
<div class="a" style="left:959px;top:623px;width:1px;height:27px;background:#b9c4e2"></div>
<div class="a" style="left:1037px;top:623px;width:1px;height:27px;background:#b9c4e2"></div>
<div class="a" style="left:1184px;top:623px;width:1px;height:27px;background:#b9c4e2"></div>
<div class="a" style="left:1324px;top:623px;width:1px;height:27px;background:#b9c4e2"></div>
<div class="cs" style="left:375px;top:630px"></div>
<div class="a" style="left:419px;top:630px;width:14px;height:12px;background:repeating-linear-gradient(#9aa0b8 0 2px,transparent 2px 4px)"></div>
<div class="th" style="left:455px">ID</div>
<div class="th" style="left:495px">Активность</div>
<div class="hm" style="left:587px"></div>
<div class="th" style="left:602px">Бренд</div>
<div class="hm" style="left:660px"></div>
<div class="th" style="left:677px">Модель</div>
<div class="hm" style="left:797px"></div>
<div class="th" style="left:813px">Артикул</div>
<div class="hm" style="left:947px"></div>
<div class="th" style="left:964px">Тип</div>
<div class="hm" style="left:1025px"></div>
<div class="th" style="left:1042px">Начало выпуска</div>
<div class="hm" style="left:1172px"></div>
<div class="th" style="left:1189px">Конец выпуска</div>
<div class="hm" style="left:1312px"></div>
<div class="th" style="left:1329px">Размеры</div>
<div class="hm" style="left:1401px"></div>
<div class="a" style="left:479px;top:632px;border-left:4px solid transparent;border-right:4px solid transparent;border-bottom:5px solid #8a96b8"></div>
<div class="a" style="left:366px;top:651px;width:1px;height:249px;background:#b9c4e2"></div>
<div class="a" style="left:1412px;top:651px;width:1px;height:249px;background:#b9c4e2"></div>
<div class="a" style="left:367px;top:651px;width:1045px;height:28px;background:#ffffff"></div>
<div class="a" style="left:450px;top:651px;width:40px;height:28px;background:#f4f6fb"></div>
<div class="a" style="left:367px;top:679px;width:1045px;height:1px;background:#d9d9d9"></div>
<div class="cs" style="left:375px;top:658px"></div>
<div class="act" style="top:658px"></div>
<div class="a" style="left:432px;top:665px;border-left:3px solid transparent;border-right:3px solid transparent;border-top:3px solid #111"></div>
<div class="td" style="left:455px;top:656px">1</div>
<div class="td" style="left:495px;top:656px">Да</div>
<div class="td" style="left:602px;top:656px">[<span class="ln">1</span>] AUDI</div>
<div class="td" style="left:677px;top:656px">[<span class="ln">2</span>] A3 2003-</div>
<div class="td" style="left:813px;top:656px;font-size:12px;letter-spacing:0">8580AGSGYMVW1B</div>
<div class="td" style="left:964px;top:656px">ветровое</div>
<div class="td" style="left:1042px;top:656px">2003</div>
<div class="td" style="left:1329px;top:656px">1478x878</div>
<div class="a" style="left:367px;top:680px;width:1045px;height:28px;background:#f7f7f7"></div>
<div class="a" style="left:450px;top:680px;width:40px;height:28px;background:#eef0f6"></div>
<div class="a" style="left:367px;top:708px;width:1045px;height:1px;background:#d9d9d9"></div>
<div class="cs" style="left:375px;top:687px"></div>
<div class="act" style="top:687px"></div>
<div class="a" style="left:432px;top:694px;border-left:3px solid transparent;border-right:3px solid transparent;border-top:3px solid #111"></div>
<div class="td" style="left:455px;top:685px">2</div>
<div class="td" style="left:495px;top:685px">Да</div>
<div class="td" style="left:602px;top:685px">[<span class="ln">1</span>] AUDI</div>
<div class="td" style="left:677px;top:685px">[<span class="ln">2</span>] A3 2003-</div>
<div class="td" style="left:813px;top:685px;font-size:12px;letter-spacing:0">8580AGSVW</div>
<div class="td" style="left:964px;top:685px">ветровое</div>
<div class="td" style="left:1042px;top:685px">2003</div>
<div class="td" style="left:1329px;top:685px">1478x878</div>
<div class="a" style="left:367px;top:709px;width:1045px;height:28px;background:#ffffff"></div>
<div class="a" style="left:450px;top:709px;width:40px;height:28px;background:#f4f6fb"></div>
<div class="a" style="left:367px;top:737px;width:1045px;height:1px;background:#d9d9d9"></div>
<div class="cs" style="left:375px;top:716px"></div>
<div class="act" style="top:716px"></div>
<div class="a" style="left:432px;top:723px;border-left:3px solid transparent;border-right:3px solid transparent;border-top:3px solid #111"></div>
<div class="td" style="left:455px;top:714px">3</div>
<div class="td" style="left:495px;top:714px">Да</div>
<div class="td" style="left:602px;top:714px">[<span class="ln">1</span>] AUDI</div>
<div class="td" style="left:677px;top:714px">[<span class="ln">2</span>] A3 2003-</div>
<div class="td" style="left:813px;top:714px;font-size:12px;letter-spacing:0">8580AGSGYVW</div>
<div class="td" style="left:964px;top:714px">ветровое</div>
<div class="td" style="left:1042px;top:714px">2003</div>
<div class="td" style="left:1329px;top:714px">1478x878</div>
<div class="a" style="left:367px;top:738px;width:1045px;height:28px;background:#f7f7f7"></div>
<div class="a" style="left:450px;top:738px;width:40px;height:28px;background:#eef0f6"></div>
<div class="a" style="left:367px;top:766px;width:1045px;height:1px;background:#d9d9d9"></div>
<div class="cs" style="left:375px;top:745px"></div>
<div class="act" style="top:745px"></div>
<div class="a" style="left:432px;top:752px;border-left:3px solid transparent;border-right:3px solid transparent;border-top:3px solid #111"></div>
<div class="td" style="left:455px;top:743px">4</div>
<div class="td" style="left:495px;top:743px">Да</div>
<div class="td" style="left:602px;top:743px">[<span class="ln">1</span>] AUDI</div>
<div class="td" style="left:677px;top:743px">[<span class="ln">2</span>] A3 2003-</div>
<div class="td" style="left:813px;top:743px;font-size:12px;letter-spacing:0">8580AGSGYW</div>
<div class="td" style="left:964px;top:743px">ветровое</div>
<div class="td" style="left:1042px;top:743px">2003</div>
<div class="td" style="left:1329px;top:743px">1478x878</div>
<div class="a" style="left:367px;top:767px;width:1045px;height:28px;background:#ffffff"></div>
<div class="a" style="left:450px;top:767px;width:40px;height:28px;background:#f4f6fb"></div>
<div class="a" style="left:367px;top:795px;width:1045px;height:1px;background:#d9d9d9"></div>
<div class="cs" style="left:375px;top:774px"></div>
<div class="act" style="top:774px"></div>
<div class="a" style="left:432px;top:781px;border-left:3px solid transparent;border-right:3px solid transparent;border-top:3px solid #111"></div>
<div class="td" style="left:455px;top:772px">5</div>
<div class="td" style="left:495px;top:772px">Да</div>
<div class="td" style="left:602px;top:772px">[<span class="ln">1</span>] AUDI</div>
<div class="td" style="left:677px;top:772px">[<span class="ln">2</span>] A3 2003-</div>
<div class="td" style="left:813px;top:772px;font-size:12px;letter-spacing:0">8580BGSEAGJXW</div>
<div class="td" style="left:964px;top:772px">заднее</div>
<div class="td" style="left:1042px;top:772px">2004</div>
<div class="a" style="left:367px;top:796px;width:1045px;height:28px;background:#f7f7f7"></div>
<div class="a" style="left:450px;top:796px;width:40px;height:28px;background:#eef0f6"></div>
<div class="a" style="left:367px;top:824px;width:1045px;height:1px;background:#d9d9d9"></div>
<div class="cs" style="left:375px;top:803px"></div>
<div class="act" style="top:803px"></div>
<div class="a" style="left:432px;top:810px;border-left:3px solid transparent;border-right:3px solid transparent;border-top:3px solid #111"></div>
<div class="td" style="left:455px;top:801px">6</div>
<div class="td" style="left:495px;top:801px">Да</div>
<div class="td" style="left:602px;top:801px">[<span class="ln">1</span>] AUDI</div>
<div class="td" style="left:677px;top:801px">[<span class="ln">2</span>] A3 2003-</div>
<div class="td" style="left:813px;top:801px;font-size:12px;letter-spacing:0">8580BGSHAGZ</div>
<div class="td" style="left:964px;top:801px">заднее</div>
<div class="td" style="left:1042px;top:801px">2003</div>
<div class="td" style="left:1329px;top:801px">1339x511</div>
<div class="a" style="left:367px;top:825px;width:1045px;height:28px;background:#ffffff"></div>
<div class="a" style="left:450px;top:825px;width:40px;height:28px;background:#f4f6fb"></div>
<div class="a" style="left:367px;top:853px;width:1045px;height:1px;background:#d9d9d9"></div>
<div class="cs" style="left:375px;top:832px"></div>
<div class="act" style="top:832px"></div>
<div class="a" style="left:432px;top:839px;border-left:3px solid transparent;border-right:3px solid transparent;border-top:3px solid #111"></div>
<div class="td" style="left:455px;top:830px">7</div>
<div class="td" style="left:495px;top:830px">Да</div>
<div class="td" style="left:602px;top:830px">[<span class="ln">1</span>] AUDI</div>
<div class="td" style="left:677px;top:830px">[<span class="ln">2</span>] A3 2003-</div>
<div class="td" style="left:813px;top:830px;font-size:12px;letter-spacing:0">8580LGSE5FD</div>
<div class="td" style="left:964px;top:830px">боковое</div>
<div class="td" style="left:1042px;top:830px">2004</div>
<div class="td" style="left:1329px;top:830px">926x511</div>
<div class="a" style="left:367px;top:854px;width:1045px;height:28px;background:#f7f7f7"></div>
<div class="a" style="left:450px;top:854px;width:40px;height:28px;background:#eef0f6"></div>
<div class="a" style="left:367px;top:882px;width:1045px;height:1px;background:#d9d9d9"></div>
<div class="cs" style="left:375px;top:861px"></div>
<div class="act" style="top:861px"></div>
<div class="a" style="left:432px;top:868px;border-left:3px solid transparent;border-right:3px solid transparent;border-top:3px solid #111"></div>
<div class="td" style="left:455px;top:859px">8</div>
<div class="td" style="left:495px;top:859px">Да</div>
<div class="td" style="left:602px;top:859px">[<span class="ln">1</span>] AUDI</div>
<div class="td" style="left:677px;top:859px">[<span class="ln">2</span>] A3 2003-</div>
<div class="td" style="left:813px;top:859px;font-size:12px;letter-spacing:0">8580LGSE5RD</div>
<div class="td" style="left:964px;top:859px">боковое</div>
<div class="td" style="left:1042px;top:859px">2004</div>
<div class="td" style="left:1329px;top:859px">662x509</div>
<div class="a" style="left:367px;top:883px;width:1045px;height:28px;background:#ffffff"></div>
<div class="a" style="left:450px;top:883px;width:40px;height:28px;background:#f4f6fb"></div>
<div class="a" style="left:367px;top:911px;width:1045px;height:1px;background:#d9d9d9"></div>
<div class="cs" style="left:375px;top:890px"></div>
<div class="act" style="top:890px"></div>
<div class="a" style="left:432px;top:897px;border-left:3px solid transparent;border-right:3px solid transparent;border-top:3px solid #111"></div>
<div class="td" style="left:455px;top:888px">9</div>
<div class="td" style="left:495px;top:888px">Да</div>
<div class="td" style="left:602px;top:888px">[<span class="ln">1</span>] AUDI</div>
<div class="td" style="left:677px;top:888px">[<span class="ln">2</span>] A3 2003-</div>
<div class="td" style="left:813px;top:888px;font-size:12px;letter-spacing:0">8580LGSE5RQZ1M</div>
<div class="td" style="left:964px;top:888px">боковое</div>
<div class="td" style="left:1042px;top:888px">2004</div>
<div id="vscroll" class="a"></div>
<div class="a" style="left:1423px;top:143px;width:17px;height:18px;background:#fafafa"></div>
<div class="a" style="left:1427px;top:148px;border-left:5px solid transparent;border-right:5px solid transparent;border-bottom:4px solid #333"></div>
<div class="a" style="left:1423px;top:161px;width:1px;height:546px;background:#fafafa"></div>
<div class="a" style="left:1424px;top:161px;width:15px;height:547px;border:1px solid #8a8a8a;border-radius:2px;background:linear-gradient(90deg,#f8f8f8,#f0f0f0 45%,#d5d5d8 55%,#c9c9cf)"></div>
<div class="a" style="left:1428px;top:429px;width:7px;height:7px;border-top:1px solid #777;border-bottom:1px solid #777"></div>
<div class="a" style="left:1428px;top:432px;width:7px;height:1px;background:#777"></div>
</body></html>
